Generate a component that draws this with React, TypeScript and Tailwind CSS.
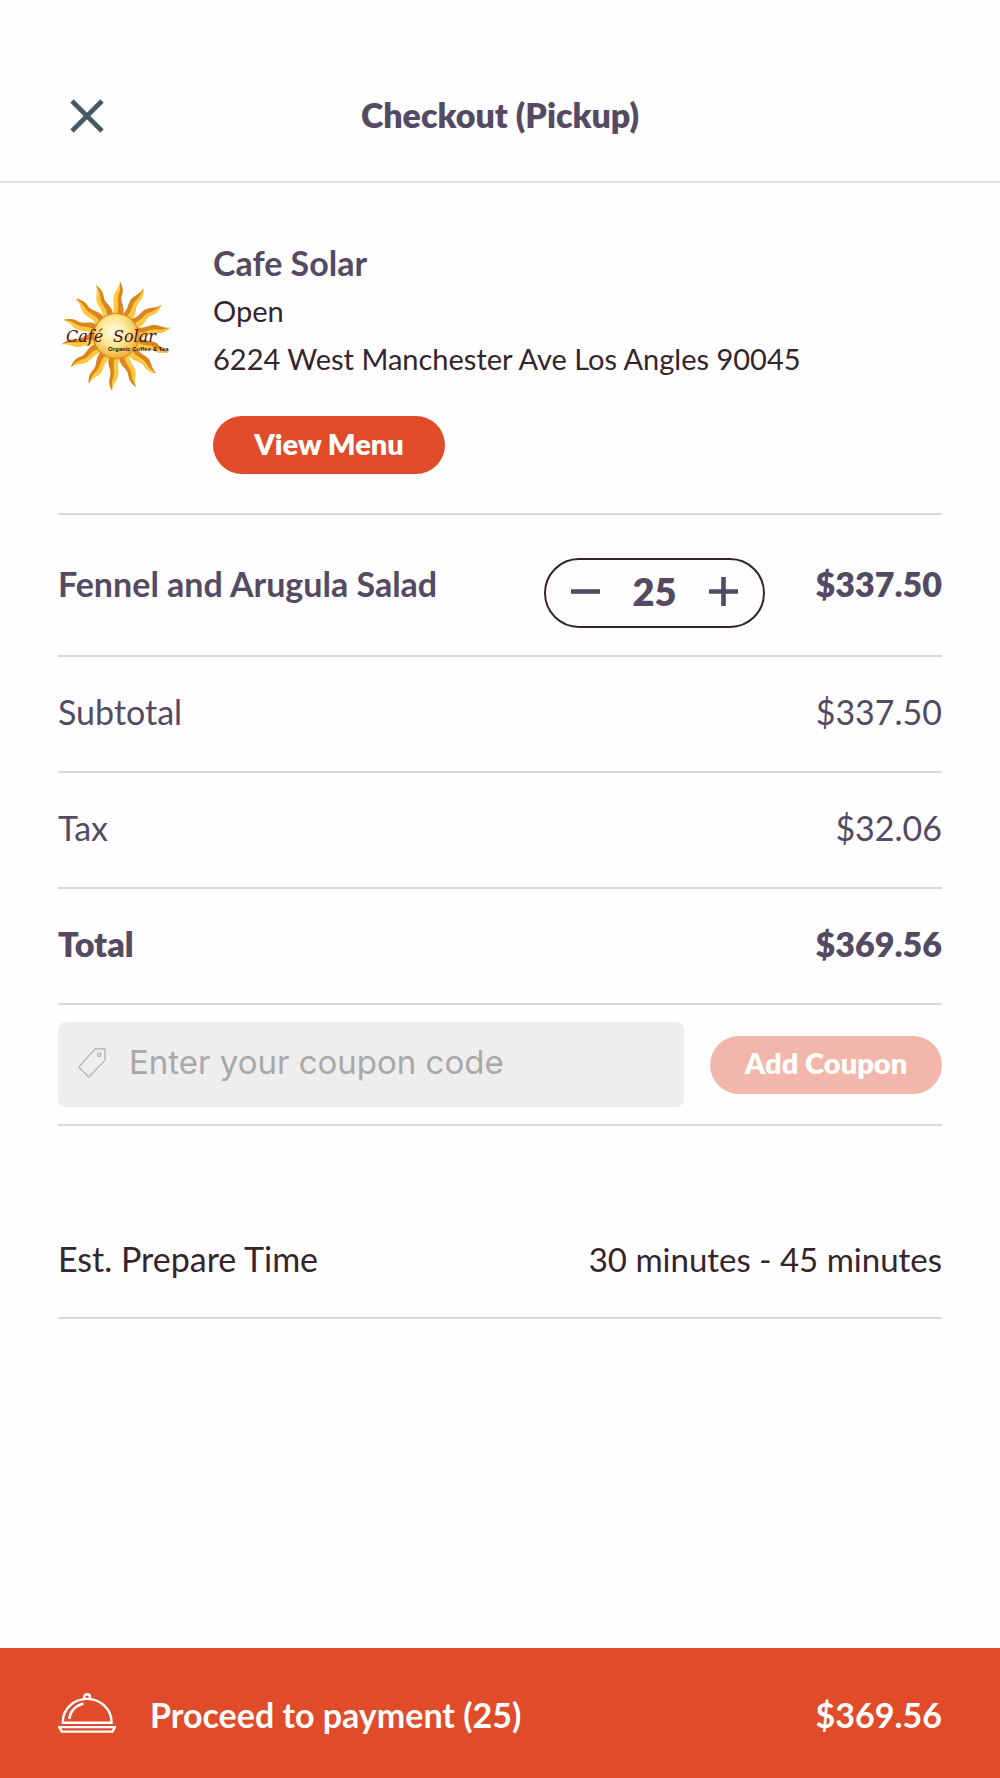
import { useState } from "react";

const UNIT_PRICE = 13.5;
const TAX_RATE = 0.095;

const RAY_ANGLES = Array.from({ length: 14 }, (_, i) => 4 + (i * 360) / 14);

const formatPrice = (value: number) => `$${value.toFixed(2)}`;

function CloseIcon() {
  return (
    <svg viewBox="0 0 34 34" className="size-[34px]" fill="none" stroke="#455a64" strokeWidth="4.6" aria-hidden="true">
      <path d="M2 2 32 32M32 2 2 32" />
    </svg>
  );
}

function TagIcon() {
  return (
    <svg viewBox="0 0 28 30" className="h-[30px] w-7 shrink-0" fill="none" stroke="#b0b0b0" strokeWidth="1.2" aria-hidden="true">
      <path d="M17.3.8H27v11.5L10.8 29.2.8 19.1Z" />
      <circle cx="21.2" cy="6.7" r="1.7" />
    </svg>
  );
}

function ClocheIcon() {
  return (
    <svg viewBox="0 0 58 40" className="h-10 w-[58px] shrink-0" fill="none" stroke="#fff" strokeWidth="2.4" aria-hidden="true">
      <path d="M4.8 29.8V29C4.8 16 15.8 5.9 29 5.9S53.5 16 53.5 29v.8Z" />
      <path d="M26.2 6V4.2a2.9 2.9 0 0 1 5.8 0V6" />
      <path d="M11.2 26C12 18.5 17.5 12.5 25.5 10.5" />
      <path d="M1.2 34.1H56.8L54.5 38.6H3.8Z" />
    </svg>
  );
}

function CafeLogo() {
  return (
    <svg viewBox="0 0 116 116" className="size-[116px] shrink-0" role="img" aria-label="Cafe Solar">
      <defs>
        <radialGradient id="sun" cx="0.45" cy="0.4" r="0.62">
          <stop offset="0" stopColor="#fffce8" />
          <stop offset="0.5" stopColor="#fbe794" />
          <stop offset="1" stopColor="#f0aa2c" />
        </radialGradient>
      </defs>
      {RAY_ANGLES.map((angle) => {
        // light comes from the lower right, so the shaded edge swaps sides
        const shadeLeft = angle > 20 && angle < 150;
        return (
          <g key={angle} transform={`translate(58 58) rotate(${angle})`}>
            <path
              d="M-6-21C-1-29-8-36-4-43-2-47 0-50 0-55 4-49 4-45 3-41 1-34 8-30 5-21Z"
              fill={shadeLeft ? "#dc8420" : "#fbc93f"}
            />
            <path
              d="M-1-21C3-29-3-35 0-42 1-46 1-50 0-55 4-49 4-45 3-41 1-34 8-30 5-21Z"
              fill={shadeLeft ? "#fbc93f" : "#dc8420"}
            />
          </g>
        );
      })}
      <circle cx="58" cy="58" r="22.5" fill="url(#sun)" stroke="#d98a20" strokeWidth="1.2" />
      <g className="font-['DejaVu_Serif',serif] italic" fontSize="16" fill="#4a1020">
        <text x="8" y="64">
          Café
        </text>
        <text x="55" y="64">
          Solar
        </text>
      </g>
      <text x="50" y="73" fontSize="6" className="font-['Liberation_Sans',sans-serif] font-bold" fill="#1f1a10">
        Organic Coffee & Tea
      </text>
    </svg>
  );
}

function SummaryRow({ label, value, strong = false }: { label: string; value: string; strong?: boolean }) {
  return (
    <div
      className={`flex h-[116px] items-center justify-between border-b-2 border-[#d9d9d9] pb-[5px] text-[34px] text-[#544a63] ${
        strong ? "font-extrabold" : ""
      }`}
    >
      <dt>{label}</dt>
      <dd>{value}</dd>
    </div>
  );
}

export default function App() {
  const [quantity, setQuantity] = useState(25);
  const [coupon, setCoupon] = useState("");

  const subtotal = quantity * UNIT_PRICE;
  const tax = Math.floor(subtotal * TAX_RATE * 100) / 100;
  const total = subtotal + tax;

  return (
    <div className="flex min-h-screen flex-col bg-[#fefefe] font-[Lato,sans-serif] text-[#35242e]">
      <header className="grid grid-cols-[1fr_auto_1fr] items-center border-b-2 border-[#e4e4e4] px-[70px] pt-[81px] pb-[32px]">
        <button type="button" aria-label="Close" className="justify-self-start pt-[2px]">
          <CloseIcon />
        </button>
        <h1 className="text-[34px] leading-[68px] font-extrabold text-[#544a63]">Checkout (Pickup)</h1>
      </header>

      <main className="flex-1 px-[58px]">
        {/* Restaurant */}
        <section className="flex items-start gap-[39px] border-b-2 border-[#d9d9d9] pt-[56px] pb-[39px]">
          <div className="pt-[39px]">
            <CafeLogo />
          </div>
          <div className="min-w-0">
            <h2 className="text-[34px] leading-[48px] font-bold text-[#544a63]">Cafe Solar</h2>
            <p className="text-[29px] leading-[48px]">Open</p>
            <p className="text-[29px] leading-[48px]">6224 West Manchester Ave Los Angles 90045</p>
            <button
              type="button"
              className="mt-[33px] h-[58px] w-[232px] rounded-full bg-[#e04c2a] pb-[3px] text-[29px] font-extrabold text-white"
            >
              View Menu
            </button>
          </div>
        </section>

        {/* Cart item */}
        <section className="flex h-[142px] items-center border-b-2 border-[#d9d9d9] text-[34px] text-[#544a63]">
          <h3 className="flex-1 pb-[3px] font-bold">Fennel and Arugula Salad</h3>
          <div className="mt-4 flex h-[70px] w-[221px] items-center justify-between rounded-full border-2 border-[#35242e] px-[25px] pb-[3px]">
            <button type="button" aria-label="Remove one" onClick={() => setQuantity(Math.max(1, quantity - 1))}>
              <svg viewBox="0 0 29 29" className="size-[29px]" stroke="currentColor" strokeWidth="4.6">
                <path d="M0 14.5H29" />
              </svg>
            </button>
            <span className="text-[38px] font-extrabold">{quantity}</span>
            <button type="button" aria-label="Add one" onClick={() => setQuantity(quantity + 1)}>
              <svg viewBox="0 0 29 29" className="size-[29px]" stroke="currentColor" strokeWidth="4.6">
                <path d="M0 14.5H29M14.5 0V29" />
              </svg>
            </button>
          </div>
          <span className="w-[177px] pb-[3px] text-right font-extrabold">{formatPrice(subtotal)}</span>
        </section>

        <dl>
          <SummaryRow label="Subtotal" value={formatPrice(subtotal)} />
          <SummaryRow label="Tax" value={formatPrice(tax)} />
          <SummaryRow label="Total" value={formatPrice(total)} strong />
        </dl>

        {/* Coupon */}
        <form
          className="flex items-center gap-[26px] border-b-2 border-[#d9d9d9] py-[17px]"
          onSubmit={(e) => e.preventDefault()}
        >
          <label className="flex h-[85px] min-w-0 flex-1 items-center gap-[23px] rounded-lg bg-[#eeeeee] pb-[3px] pl-[20px]">
            <TagIcon />
            <input
              type="text"
              aria-label="Coupon code"
              value={coupon}
              onChange={(e) => setCoupon(e.target.value)}
              placeholder="Enter your coupon code"
              className="min-w-0 flex-1 bg-transparent font-[Inter,sans-serif] text-[33px] outline-none placeholder:text-[#a9a9a9]"
            />
          </label>
          <button
            type="submit"
            disabled={!coupon}
            className="h-[58px] w-[232px] rounded-full bg-[#e04c2a] pb-[3px] text-[29px] font-extrabold text-white disabled:bg-[#f3b6aa]"
          >
            Add Coupon
          </button>
        </form>

        <section className="mt-[76px] flex h-[117px] items-baseline justify-between border-b-2 border-[#d9d9d9] pt-[31px] text-[34px]">
          <h3>Est. Prepare Time</h3>
          <p className="text-[33px]">30 minutes - 45 minutes</p>
        </section>
      </main>

      <button
        type="button"
        className="flex h-[130px] w-full items-center bg-[#e04c2a] px-[58px] text-[34px] font-bold text-white"
      >
        <ClocheIcon />
        <span className="ml-[34px] flex-1 pt-[2px] text-left">Proceed to payment ({quantity})</span>
        <span className="pt-[2px]">{formatPrice(total)}</span>
      </button>
    </div>
  );
}
